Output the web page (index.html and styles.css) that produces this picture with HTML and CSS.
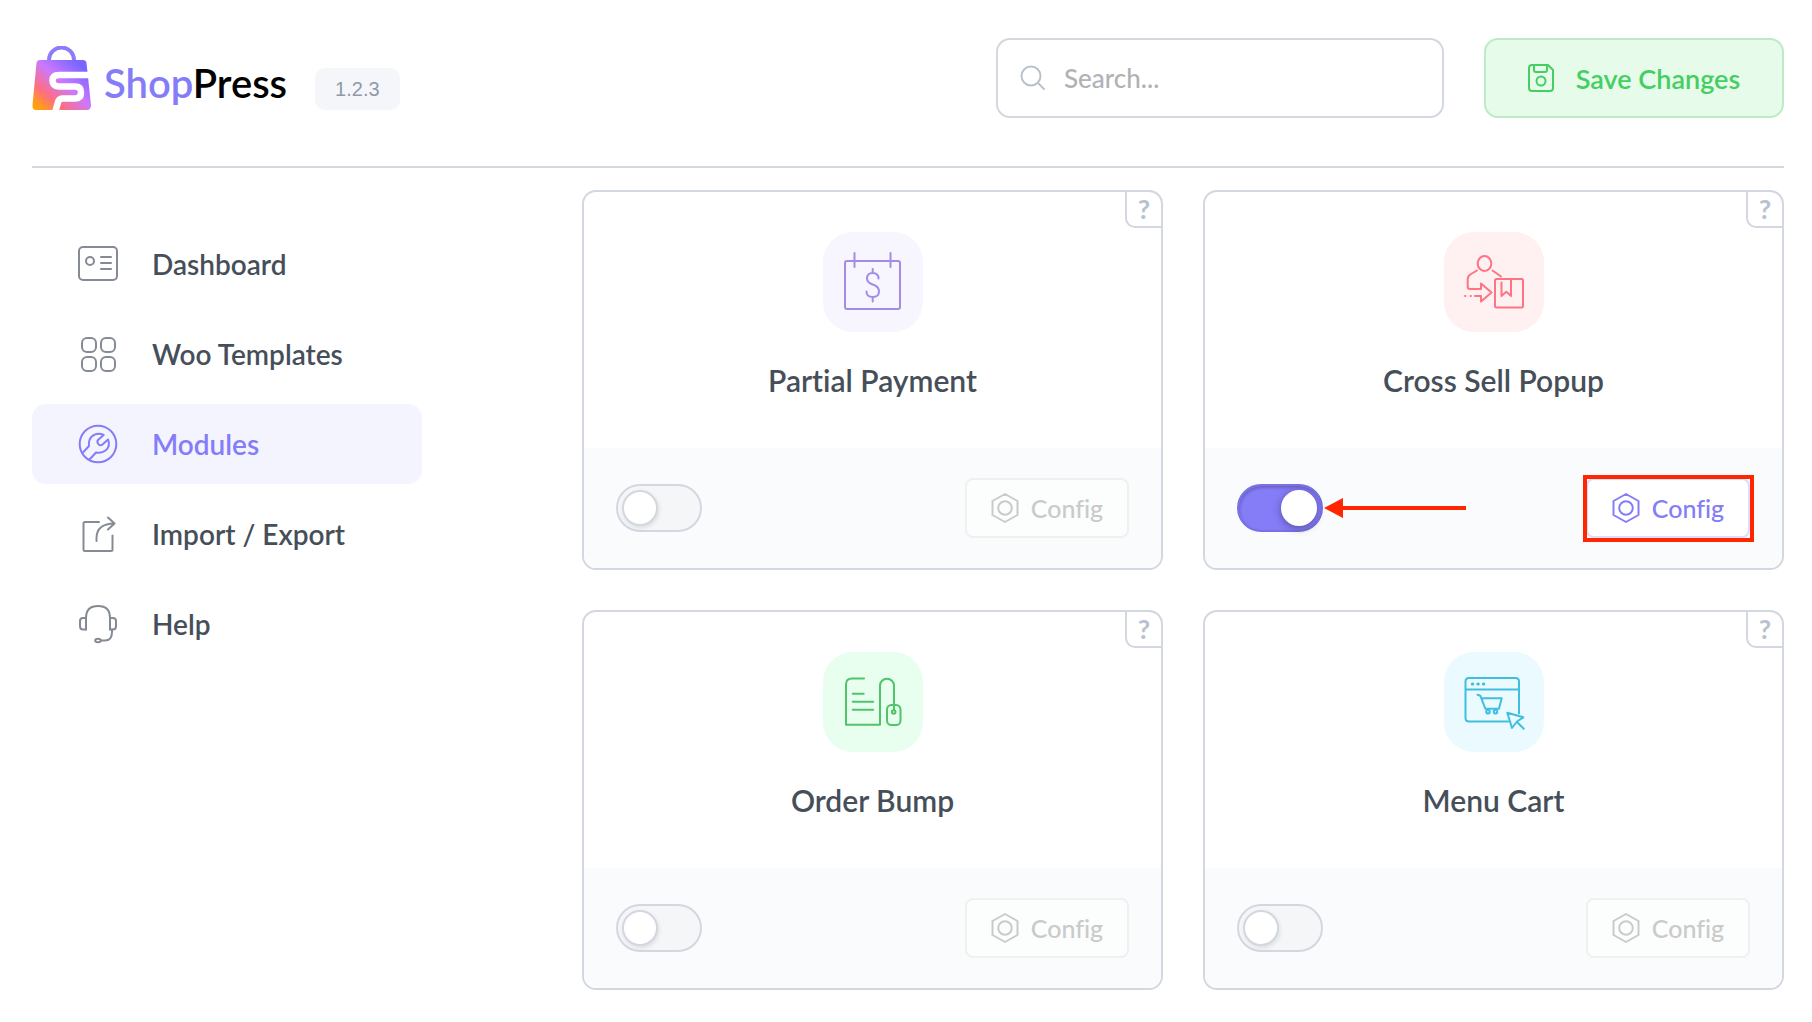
FILE: index.html
```html
<!DOCTYPE html>
<html lang="en">
  <head>
    <meta charset="UTF-8" />
    <meta name="viewport" content="width=device-width, initial-scale=1.0" />
    <title>ShopPress - Modules</title>
    <link rel="stylesheet" href="styles.css">
  </head>
  <body>
    <!-- shared icons -->
    <svg class="sprite" aria-hidden="true">
      <symbol id="icon-nut" viewBox="0 0 28 32">
        <path d="M14 2 26.500 9V23L14 30 1.500 23V9Z" />
        <circle cx="14" cy="16" r="6.800" />
      </symbol>
    </svg>

    <header class="header">
      <a href="#" class="logo">
        <svg class="logo-mark" viewBox="0 0 60 64" aria-hidden="true">
          <defs>
            <linearGradient id="bag" x1="0" y1="1" x2="0.9" y2="0.1">
              <stop offset="0" stop-color="#ffa800" />
              <stop offset="0.12" stop-color="#ff9a1f" />
              <stop offset="0.3" stop-color="#ff6f7d" />
              <stop offset="0.6" stop-color="#cb78ff" />
              <stop offset="0.95" stop-color="#7a66ff" />
            </linearGradient>
          </defs>
          <path d="M17 16V14a12.500 12.500 0 0 1 25 0v2" fill="none" stroke="#8c7bfb" stroke-width="4" />
          <path d="M8 14H51Q54 14 54.500 17L59 59Q59 64 55 64H4Q0 64 0.500 59L4.500 17Q5 14 8 14Z" fill="url(#bag)" />
          <path d="M58 29H27Q20.500 29 20.500 34.500T27 40.500H43Q49 40.500 49 46.500T43 52.500H31Q27 52.500 26 56L23.500 65" fill="none" stroke="#fff" stroke-width="6.500" />
        </svg>
        <span class="logo-text">Shop<b>Press</b></span>
      </a>
      <span class="version">1.2.3</span>

      <label class="search">
        <svg viewBox="0 0 26 26" aria-hidden="true">
          <circle cx="11" cy="11" r="9.500" />
          <path d="M18 18 24 24" />
        </svg>
        <input type="search" placeholder="Search..." aria-label="Search modules" />
      </label>
      <button type="button" class="save">
        <svg viewBox="0 0 26 28" aria-hidden="true">
          <path d="M4 1H20L25 6V24Q25 27 22 27H4Q1 27 1 24V4Q1 1 4 1Z" />
          <path d="M6 1V6Q6 8 8 8H17Q19 8 19 6V1" />
          <circle cx="13" cy="17" r="4.500" />
        </svg>
        Save Changes
      </button>
    </header>

    <div class="layout">
      <nav class="sidebar">
        <a href="#">
          <svg viewBox="0 0 40 40" aria-hidden="true">
            <rect x="1" y="3" width="38" height="33" rx="4" />
            <circle cx="12" cy="17" r="4" />
            <path d="M23 13h10M23 19h10M23 25h10" />
          </svg>
          Dashboard
        </a>
        <a href="#">
          <svg viewBox="0 0 40 40" aria-hidden="true">
            <rect x="4" y="4" width="14" height="14" rx="5" />
            <rect x="23" y="4" width="14" height="14" rx="5" />
            <rect x="4" y="23" width="14" height="14" rx="5" />
            <rect x="23" y="23" width="14" height="14" rx="5" />
          </svg>
          Woo Templates
        </a>
        <a href="#" class="active" aria-current="page">
          <svg viewBox="0 0 40 40" aria-hidden="true">
            <circle cx="20" cy="20" r="18.300" />
            <path d="M4.500 29 11 22Q10.500 19 11.500 16C13 11.500 19 8 25.700 11L20.500 15.500Q18.500 17.500 20 19.500Q22 22.500 24.500 20.500L30 15.500C32 20 30.500 24 27.500 26.500Q24 29.500 18 28.500L11.500 35.500" />
          </svg>
          Modules
        </a>
        <a href="#">
          <svg viewBox="0 0 40 40" aria-hidden="true">
            <path d="M21 8H7Q5.500 8 5.500 9.500V35.500Q5.500 37 7 37H33Q34.500 37 34.500 35.500V21.500" />
            <path d="M18.500 27V24Q18.500 10 36 9.500M30 3.500 36.500 9.500 30 15.500" />
          </svg>
          Import / Export
        </a>
        <a href="#">
          <svg viewBox="0 0 40 40" aria-hidden="true">
            <path d="M8 25.500V14Q8 2 20 2T32 14V25.500" />
            <path d="M8 14H5Q2 14 2 17V22Q2 25.500 5 25.500H8M32 14H35Q38 14 38 17V22Q38 25.500 35 25.500H32" />
            <path d="M34 25.500V28Q34 36.500 27 36.500H23" />
            <ellipse cx="20" cy="36.500" rx="2.800" ry="1.800" />
          </svg>
          Help
        </a>
      </nav>

      <main class="modules">
        <section class="card">
          <button type="button" class="hint" aria-label="About Partial Payment">?</button>
          <div class="card-body">
            <svg class="tile purple" viewBox="0 0 100 100" aria-hidden="true">
              <rect x="22" y="29" width="55" height="48" rx="2" />
              <path d="M31.500 21v14M67.500 21v14" />
              <path d="M55.500 46.500Q55.500 41 49.700 41T44 46.500Q44 50.500 49.700 52.500Q56 54.500 56 59.500Q56 65 49.700 65T43.500 59.500M49.700 37v4M49.700 65v4.500" />
            </svg>
            <h2>Partial Payment</h2>
          </div>
          <div class="card-footer">
            <input type="checkbox" class="toggle" aria-label="Enable Partial Payment" />
            <button type="button" class="config" disabled><svg><use href="#icon-nut" /></svg>Config</button>
          </div>
        </section>

        <section class="card">
          <button type="button" class="hint" aria-label="About Cross Sell Popup">?</button>
          <div class="card-body">
            <svg class="tile red" viewBox="0 0 100 100" aria-hidden="true">
              <ellipse cx="40.500" cy="31.500" rx="6.800" ry="7.400" />
              <path d="M33 38.500 27 42Q23.700 44 23.700 47V55Q23.700 57 26 57H37V51.500L47.500 60.500 37 69.500V64H31M48.500 38.500 57 44.500" />
              <path d="M26.500 64h.4M21 64h.4" />
              <rect x="51" y="47" width="28" height="28.500" rx="1.500" />
              <path d="M57.500 50.500V64L62.300 59.700 67 64V47" />
            </svg>
            <h2>Cross Sell Popup</h2>
          </div>
          <div class="card-footer">
            <input type="checkbox" class="toggle" aria-label="Enable Cross Sell Popup" checked />
            <svg class="arrow" viewBox="0 0 144 20" aria-hidden="true">
              <path d="M1 10 20 0V8H143V12H20V20Z" />
            </svg>
            <button type="button" class="config marked"><svg><use href="#icon-nut" /></svg>Config</button>
          </div>
        </section>

        <section class="card">
          <button type="button" class="hint" aria-label="About Order Bump">?</button>
          <div class="card-body">
            <svg class="tile green" viewBox="0 0 100 100" aria-hidden="true">
              <path d="M41 26.500H29Q23 26.500 23 32.500V72.700H57V33.700A7 7 0 0 1 71 33.700V57.500" />
              <path d="M29.700 41.700h11M29.700 49.700h20.500M29.700 57.700h20.500" />
              <rect x="64" y="53" width="13.500" height="20" rx="4.500" />
              <circle cx="70.700" cy="60" r="1.800" />
            </svg>
            <h2>Order Bump</h2>
          </div>
          <div class="card-footer">
            <input type="checkbox" class="toggle" aria-label="Enable Order Bump" />
            <button type="button" class="config" disabled><svg><use href="#icon-nut" /></svg>Config</button>
          </div>
        </section>

        <section class="card">
          <button type="button" class="hint" aria-label="About Menu Cart">?</button>
          <div class="card-body">
            <svg class="tile blue" viewBox="0 0 100 100" aria-hidden="true">
              <path d="M64 69.500H25Q21.500 69.500 21.500 66V29.500Q21.500 26 25 26H71.500Q75 26 75 29.500V61.500M21.500 37.500H75" />
              <path d="M28.300 32h.5M33.800 32h.5M39.300 32h.5" stroke-width="3" />
              <path d="M33.500 42.700 36.300 43.700 41.300 56.700H55L57.700 46.300H37.700" />
              <circle cx="44" cy="59.800" r="1.800" />
              <circle cx="51.500" cy="59.800" r="1.800" />
              <path d="M63.300 60.700 79.300 65.300 73 69.500 68 76ZM74 71 79.700 76.700" />
            </svg>
            <h2>Menu Cart</h2>
          </div>
          <div class="card-footer">
            <input type="checkbox" class="toggle" aria-label="Enable Menu Cart" />
            <button type="button" class="config" disabled><svg><use href="#icon-nut" /></svg>Config</button>
          </div>
        </section>
      </main>
    </div>
  </body>
</html>
```
FILE: styles.css
```css
*,
*::before,
*::after {
  margin: 0;
  padding: 0;
  box-sizing: border-box;
}

body {
  font-family: "Lato", sans-serif;
  font-weight: 500;
  font-variant-ligatures: none;
  color: #464f59;
  background: #fff;
  padding: 0 28px 0 32px;
}

button,
input {
  font: inherit;
  font-variant-ligatures: none;
}

svg {
  flex-shrink: 0;
  fill: none;
  stroke: currentColor;
  stroke-width: 2;
  stroke-linecap: round;
  stroke-linejoin: round;
}

.sprite {
  display: none;
}

/* header */
.header {
  display: flex;
  align-items: center;
  padding: 38px 0 48px;
  border-bottom: 2px solid #d2d8de;
}

.logo {
  display: flex;
  align-items: center;
  gap: 12px;
  text-decoration: none;
}

.logo-mark {
  width: 60px;
  height: 64px;
  stroke: none;
  stroke-linecap: butt;
}

.logo-text {
  padding-top: 10px;
  font-size: 40px;
  line-height: 48px;
  font-weight: 600;
  color: #857cf8;
}

.logo-text b {
  font-weight: 600;
  color: #000;
}

.version {
  margin-left: 28px;
  margin-top: 22px;
  padding: 0 20px;
  font-family: "Liberation Sans", sans-serif;
  font-size: 20px;
  line-height: 42px;
  color: #8e9aa8;
  background: #f4f6fa;
  border-radius: 10px;
}

.search {
  display: flex;
  align-items: center;
  gap: 18px;
  width: 448px;
  height: 80px;
  margin-left: auto;
  padding: 0 22px;
  border: 2px solid #d2d8de;
  border-radius: 14px;
}

.search svg {
  width: 26px;
  height: 26px;
  color: #b8c2cf;
}

.search input {
  width: 100%;
  font-size: 26px;
  border: none;
  outline: none;
  background: none;
}

.search input::placeholder {
  color: #b0b2b5;
}

.save {
  display: flex;
  align-items: center;
  justify-content: center;
  gap: 22px;
  width: 300px;
  height: 80px;
  margin-left: 40px;
  font-size: 27px;
  font-weight: 600;
  color: #45ce62;
  background: #e6fbea;
  border: 2px solid #bdebc6;
  border-radius: 14px;
  cursor: pointer;
}

.save svg {
  width: 26px;
  height: 28px;
}

/* sidebar + cards */
.layout {
  display: flex;
  gap: 160px;
}

.sidebar {
  display: flex;
  flex-direction: column;
  flex-shrink: 0;
  gap: 10px;
  width: 390px;
  padding-top: 56px;
}

.sidebar a {
  display: flex;
  align-items: center;
  gap: 34px;
  height: 80px;
  padding-left: 46px;
  font-size: 28px;
  font-weight: 600;
  color: #464f59;
  text-decoration: none;
  border-radius: 14px;
}

.sidebar svg {
  width: 40px;
  height: 40px;
  color: #858b95;
}

.sidebar .active,
.sidebar .active svg {
  color: #857cf8;
}

.sidebar .active {
  background: #f4f4ff;
}

.modules {
  display: grid;
  grid-template-columns: 1fr 1fr;
  gap: 40px;
  flex: 1;
  padding: 22px 0 32px;
}

.card {
  position: relative;
  border: 2px solid #d2d7e0;
  border-radius: 14px;
  overflow: hidden;
}

.hint {
  position: absolute;
  top: -2px;
  right: -2px;
  width: 38px;
  height: 38px;
  font-size: 27px;
  line-height: 34px;
  font-weight: 700;
  color: #b9c1d0;
  background: none;
  border: 2px solid #d2d7e0;
  border-radius: 0 14px 0 10px;
  cursor: pointer;
}

.card-body {
  display: flex;
  flex-direction: column;
  align-items: center;
  gap: 28px;
  padding: 40px 20px 48px;
}

.card h2 {
  font-size: 30px;
  line-height: 40px;
  font-weight: 600;
}

.tile {
  width: 100px;
  height: 100px;
  border-radius: 30px;
}

.purple {
  color: #a48be4;
  background: #f7f6ff;
}

.red {
  color: #ff7482;
  background: #fff0f1;
}

.green {
  color: #4fc468;
  background: #e8feee;
}

.blue {
  color: #3fbfdf;
  background: #eafaff;
}

.card-footer {
  display: flex;
  align-items: center;
  height: 120px;
  padding: 0 32px;
  background: #fafbfd;
}

.toggle {
  appearance: none;
  width: 86px;
  height: 48px;
  padding: 4px;
  background: #f5f6f8;
  border: 2px solid #d2d7e0;
  border-radius: 24px;
  cursor: pointer;
}

.toggle::before {
  content: "";
  display: block;
  width: 36px;
  height: 36px;
  background: #fff;
  border: 2px solid #d2d7e0;
  border-radius: 50%;
  box-shadow: 1px 2px 4px rgba(0, 0, 0, 0.1);
}

.toggle:checked {
  background: #857cf8;
  border-color: #7a71e4;
  box-shadow: inset 1px 2px 3px rgba(0, 0, 0, 0.2);
}

.toggle:checked::before {
  margin-left: auto;
  border-color: #fff;
  box-shadow: 0 2px 8px rgba(0, 0, 0, 0.35);
}

.config {
  display: flex;
  align-items: center;
  justify-content: center;
  gap: 12px;
  width: 164px;
  height: 60px;
  margin-left: auto;
  font-size: 25px;
  font-weight: 500;
  color: #857cf8;
  background: #fff;
  border: 2px solid #dedcfd;
  border-radius: 8px;
  cursor: pointer;
}

.config svg {
  width: 28px;
  height: 32px;
}

.config:disabled {
  color: #cacaca;
  background: #fcfdfd;
  border-color: #eff0f0;
  cursor: default;
}

/* callouts */
.arrow {
  width: 144px;
  height: 20px;
  fill: #ff2600;
  stroke: none;
}

.marked {
  position: relative;
}

.marked::after {
  content: "";
  position: absolute;
  inset: -5px -6px -6px -5px;
  border: 4px solid #ff2600;
}
```
